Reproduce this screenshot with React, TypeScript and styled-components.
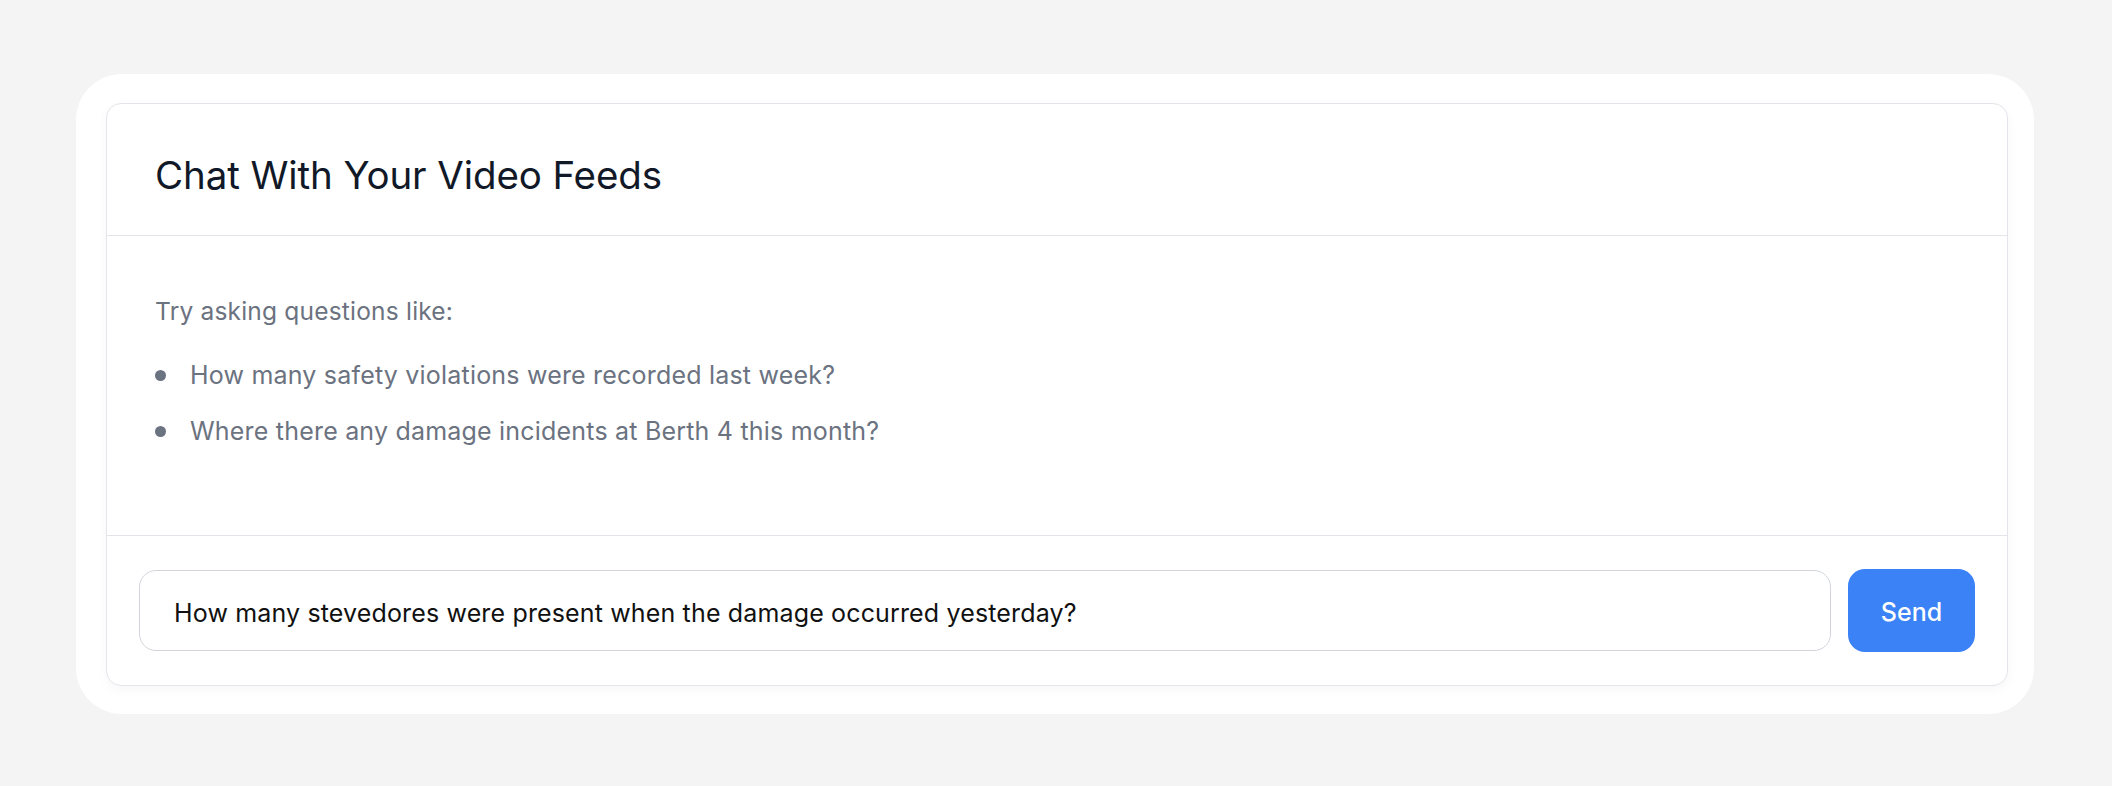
import React, { useState } from 'react';
import styled, { createGlobalStyle } from 'styled-components';

const GlobalStyle = createGlobalStyle`
  * { box-sizing: border-box; }
  html, body {
    margin: 0;
    padding: 0;
    background: #f4f4f4;
  }
  body {
    font-family: Inter, "Noto Sans", "Liberation Sans", sans-serif;
    -webkit-font-smoothing: antialiased;
  }
`;

const Page = styled.div`
  min-height: 786px;
  padding: 74px 78px 75px 76px;
  background: #f4f4f4;
`;

const Shell = styled.div`
  background: #ffffff;
  border-radius: 46px;
  padding: 29px 26px 28px 30px;
`;

const Card = styled.section`
  background: #ffffff;
  border: 1px solid #e3e5ea;
  border-radius: 15px;
  box-shadow: 0 4px 12px rgba(0, 0, 0, 0.035);
  overflow: hidden;
`;

const Header = styled.header`
  padding: 48px 48px 37px 48px;
  border-bottom: 1px solid #e3e5ea;
`;

const Title = styled.h1`
  margin: 0;
  font-size: 38.5px;
  line-height: 46px;
  font-weight: 420;
  color: #111827;
  letter-spacing: -0.1px;
`;

const Body = styled.div`
  padding: 59px 48px 88px 48px;
  border-bottom: 1px solid #e3e5ea;
`;

const Hint = styled.p`
  margin: 0;
  font-size: 24.5px;
  line-height: 32px;
  letter-spacing: 0.2px;
  color: #6b7280;
`;

const List = styled.ul`
  list-style: none;
  margin: 32px 0 0;
  padding: 0;
  display: flex;
  flex-direction: column;
  gap: 24px;
`;

const Item = styled.li`
  display: flex;
  align-items: center;
  gap: 24px;
  font-size: 25px;
  line-height: 32px;
  letter-spacing: 0.2px;
  color: #6b7280;

  &::before {
    content: '';
    width: 11px;
    height: 11px;
    border-radius: 50%;
    background: #6b7280;
    flex: none;
  }
`;

const Footer = styled.form`
  display: flex;
  align-items: center;
  gap: 17px;
  padding: 33px 32px 33px 32px;
`;

const Input = styled.input`
  flex: 1;
  height: 81px;
  padding: 4px 34px 0;
  border: 1.5px solid #d1d5db;
  border-radius: 17px;
  font-family: inherit;
  font-size: 25px;
  letter-spacing: 0.15px;
  color: #111111;
  background: #fff;
  outline: none;
`;

const SendButton = styled.button`
  width: 127px;
  height: 83px;
  padding-top: 3px;
  border: none;
  border-radius: 17px;
  background: #3b82f6;
  color: #ffffff;
  font-family: inherit;
  font-size: 25px;
  font-weight: 500;
  cursor: pointer;
`;

const examples = [
  'How many safety violations were recorded last week?',
  'Where there any damage incidents at Berth 4 this month?',
];

export default function App() {
  const [question, setQuestion] = useState(
    'How many stevedores were present when the damage occurred yesterday?',
  );

  return (
    <Page>
      <GlobalStyle />
      <Shell>
        <Card>
          <Header>
            <Title>Chat With Your Video Feeds</Title>
          </Header>
          <Body>
            <Hint>Try asking questions like:</Hint>
            <List>
              {examples.map((q) => (
                <Item key={q}>{q}</Item>
              ))}
            </List>
          </Body>
          <Footer onSubmit={(e) => e.preventDefault()}>
            <Input value={question} onChange={(e) => setQuestion(e.target.value)} />
            <SendButton type="submit">Send</SendButton>
          </Footer>
        </Card>
      </Shell>
    </Page>
  );
}
